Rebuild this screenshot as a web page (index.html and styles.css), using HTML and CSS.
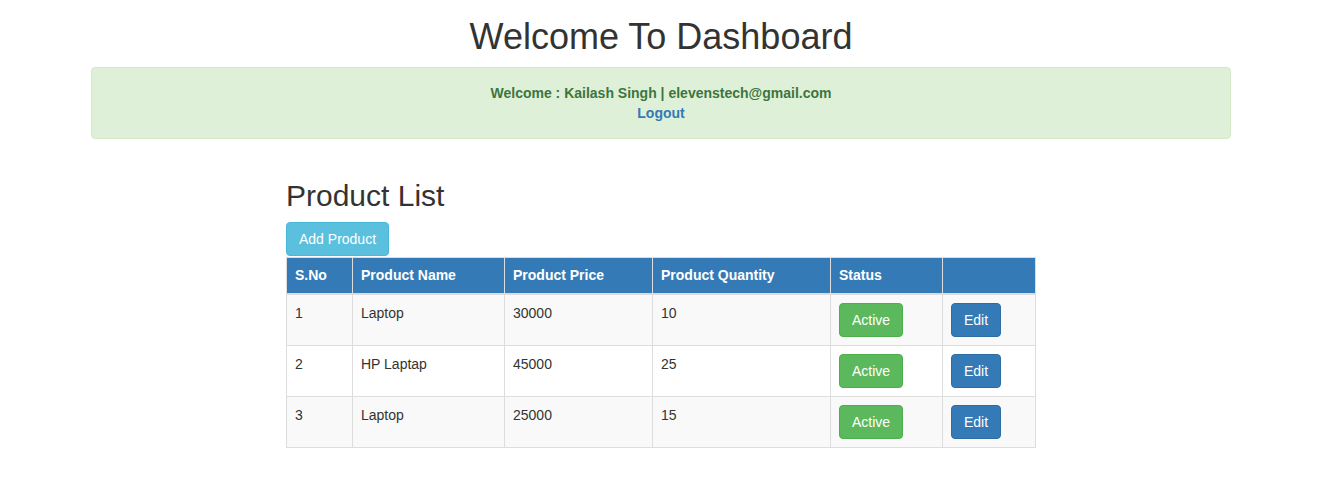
FILE: index.html
```html
<!DOCTYPE html>
<html>
<head>
<meta charset="utf-8">
<title>Dashboard</title>
<link rel="stylesheet" href="styles.css">
</head>
<body>
<div class="container">
  <h1 class="title">Welcome To Dashboard</h1>
  <div class="alert">
    <div class="welcome">Welcome : Kailash Singh | elevenstech@gmail.com</div>
    <a class="logout" href="#">Logout</a>
  </div>
  <div class="panel">
    <h2 class="subtitle">Product List</h2>
    <div class="actions"><a class="btn btn-info" href="#">Add Product</a></div>
    <table class="table">
      <colgroup>
        <col class="c1"><col class="c2"><col class="c3"><col class="c4"><col class="c5"><col class="c6">
      </colgroup>
      <thead>
        <tr><th>S.No</th><th>Product Name</th><th>Product Price</th><th>Product Quantity</th><th>Status</th><th></th></tr>
      </thead>
      <tbody>
        <tr><td>1</td><td>Laptop</td><td>30000</td><td>10</td><td><a class="btn btn-success" href="#">Active</a></td><td><a class="btn btn-primary" href="#">Edit</a></td></tr>
        <tr><td>2</td><td>HP Laptap</td><td>45000</td><td>25</td><td><a class="btn btn-success" href="#">Active</a></td><td><a class="btn btn-primary" href="#">Edit</a></td></tr>
        <tr><td>3</td><td>Laptop</td><td>25000</td><td>15</td><td><a class="btn btn-success" href="#">Active</a></td><td><a class="btn btn-primary" href="#">Edit</a></td></tr>
      </tbody>
    </table>
  </div>
</div>
</body>
</html>
```
FILE: styles.css
```css
* { box-sizing: border-box; }
html, body { margin: 0; padding: 0; }
body {
  font-family: "Liberation Sans", Arial, sans-serif;
  font-size: 14px;
  line-height: 20px;
  color: #333;
  background: #fff;
}
.container {
  width: 1140px;
  margin-left: 91px;
}
.title {
  margin: 17px 0 10px;
  font-size: 36px;
  font-weight: 500;
  line-height: 1.1;
  text-align: center;
}
.alert {
  padding: 15px;
  margin-bottom: 20px;
  border: 1px solid #d6e9c6;
  border-radius: 4px;
  background: #dff0d8;
  color: #3c763d;
  text-align: center;
  font-weight: bold;
}
.logout { color: #337ab7; text-decoration: none; font-weight: bold; }
.panel {
  width: 750px;
  margin-left: 195px;
}
.subtitle {
  margin: 40px 0 10px;
  font-size: 30px;
  font-weight: 500;
  line-height: 1.1;
}
.actions { display: flex; height: 35px; }
.btn {
  display: inline-block;
  padding: 6px 12px;
  font-size: 14px;
  line-height: 20px;
  border: 1px solid transparent;
  border-radius: 4px;
  color: #fff;
  text-decoration: none;
  white-space: nowrap;
  vertical-align: middle;
}
.actions .btn { height: 34px; }
.btn-info { background: #5bc0de; border-color: #46b8da; }
.btn-success { background: #5cb85c; border-color: #4cae4c; }
.btn-primary { background: #337ab7; border-color: #2e6da4; }
.table {
  width: 749px;
  table-layout: fixed;
  border-collapse: collapse;
  border-spacing: 0;
  margin-bottom: 20px;
}
.c1 { width: 66px; }
.c2 { width: 152px; }
.c3 { width: 148px; }
.c4 { width: 178px; }
.c5 { width: 112px; }
.c6 { width: 93px; }
.table th, .table td {
  padding: 8px;
  border: 1px solid #ddd;
  text-align: left;
  vertical-align: top;
  line-height: 20px;
}
.table th {
  background: #337ab7;
  color: #fff;
  font-weight: bold;
  padding-top: 7px;
  padding-bottom: 8px;
  border-bottom: 2px solid #ddd;
}
.table tbody tr:nth-child(odd) td { background: #f9f9f9; }
```
